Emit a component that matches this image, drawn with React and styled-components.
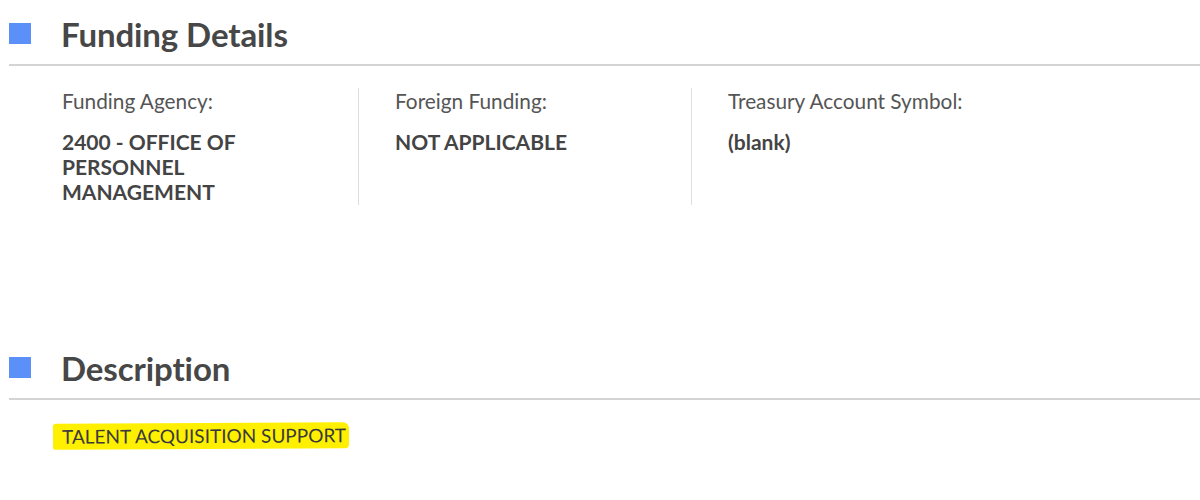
import React from "react";
import styled, { createGlobalStyle } from "styled-components";

const Global = createGlobalStyle`
  html, body { margin: 0; padding: 0; background: #fff; }
  body { font-family: "Lato", "Liberation Sans", sans-serif; color: #444; }
`;

const Page = styled.div`
  width: 1200px;
  height: 500px;
  padding-left: 9px;
  box-sizing: border-box;
  overflow: hidden;
`;

const Section = styled.section`
  margin-top: ${(p) => p.$top}px;
`;

const Header = styled.div`
  display: flex;
  align-items: center;
  height: 64px;
  border-bottom: 2px solid #d4d4d4;
`;

const Square = styled.span`
  width: 22px;
  height: 21px;
  background: #5b90f8;
  margin-top: 3px;
  margin-right: 30px;
  flex: none;
`;

const Title = styled.h2`
  margin: 0;
  padding-top: 3px;
  font-size: 33px;
  font-weight: 700;
  color: #474747;
  line-height: 40px;
  letter-spacing: -0.1px;
`;

const Grid = styled.div`
  display: grid;
  grid-template-columns: 333px 333px 1fr;
  margin: 22px 0 0 16px;
`;

const Column = styled.div`
  padding-left: 36px;
  border-left: 1px solid ${(p) => (p.$divider ? "#dedede" : "transparent")};
  height: 117px;
`;

const Label = styled.div`
  font-size: 20.8px;
  line-height: 26px;
  font-weight: 400;
  color: #555;
`;

const Value = styled.div`
  margin-top: 15px;
  font-size: 21px;
  line-height: 25px;
  font-weight: 700;
  color: #444;
  max-width: 230px;
`;

const Body = styled.div`
  padding: 23px 0 0 44px;
`;

const Marked = styled.span`
  display: inline-block;
  background: #fff000;
  padding: 1px 3px 1px 9px;
  font-size: 19px;
  line-height: 24px;
  color: #3a3a3a;
  border-radius: 3px 6px 4px 2px;
  transform: rotate(-0.3deg);
`;

const fields = [
  { label: "Funding Agency:", value: "2400 - OFFICE OF PERSONNEL MANAGEMENT" },
  { label: "Foreign Funding:", value: "NOT APPLICABLE" },
  { label: "Treasury Account Symbol:", value: "(blank)" },
];

export default function App() {
  return (
    <>
      <Global />
      <Page>
        <Section $top={0}>
          <Header>
            <Square />
            <Title>Funding Details</Title>
          </Header>
          <Grid>
            {fields.map((f, i) => (
              <Column key={f.label} $divider={i > 0}>
                <Label>{f.label}</Label>
                <Value>{f.value}</Value>
              </Column>
            ))}
          </Grid>
        </Section>
        <Section $top={129}>
          <Header>
            <Square />
            <Title>Description</Title>
          </Header>
          <Body>
            <Marked>TALENT ACQUISITION SUPPORT</Marked>
          </Body>
        </Section>
      </Page>
    </>
  );
}
